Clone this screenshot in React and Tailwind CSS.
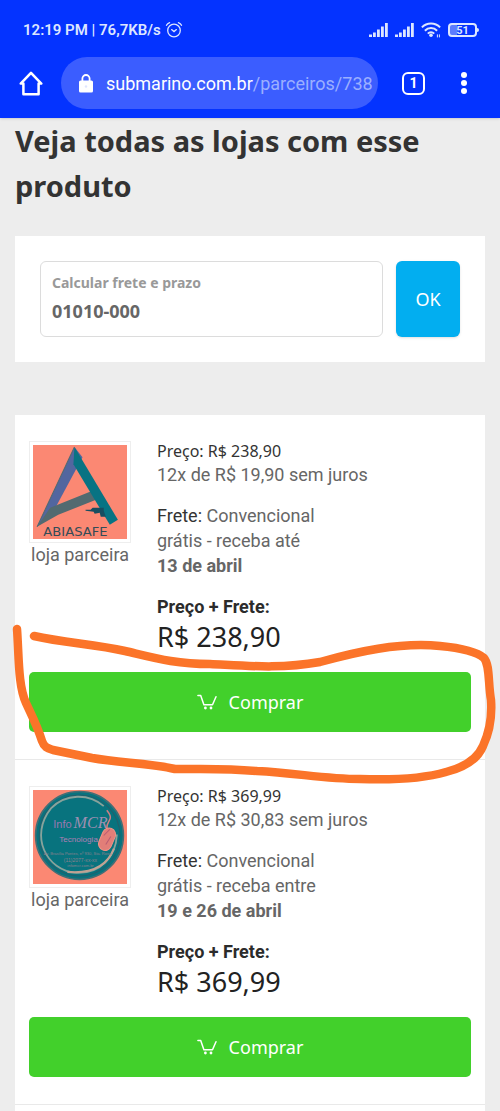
import React from "react";

const offers = [
  {
    id: "abiasafe",
    price: "R$ 238,90",
    installments: "12x de R$ 19,90 sem juros",
    receive: "grátis - receba até",
    date: "13 de abril",
    Logo: AbiasafeLogo,
  },
  {
    id: "infomcr",
    price: "R$ 369,99",
    installments: "12x de R$ 30,83 sem juros",
    receive: "grátis - receba entre",
    date: "19 e 26 de abril",
    Logo: InfoLogo,
  },
];

function AlarmIcon() {
  return (
    <svg viewBox="0 0 18 18" className="size-[18px]" fill="none" stroke="currentColor" strokeWidth="1.3" strokeLinecap="round" aria-hidden="true">
      <circle cx="9" cy="9.5" r="6.3" />
      <path d="M6.6 8.6 9 10.6l2.4-2M1.5 4.3Q2.4 2.3 4.6 1.6M16.5 4.3Q15.6 2.3 13.4 1.6" />
    </svg>
  );
}

function SignalIcon() {
  return (
    <svg viewBox="0 0 19 14" className="h-[14px] w-[19px]" fill="currentColor" aria-hidden="true">
      <path d="M0 11.5h3V14H0zM4 9.5h2.8V14H4zM8 6.5h2.8V14H8zM12 3.5h2.8V14H12zM16 0h2.8v14H16z" />
    </svg>
  );
}

function WifiIcon() {
  return (
    <svg viewBox="0 0 20 16" className="h-4 w-5" fill="none" stroke="currentColor" strokeWidth="2" aria-hidden="true">
      <path d="M.9 5.4a12.6 12.6 0 0 1 18.2 0M3.9 8.7a8.4 8.4 0 0 1 12.2 0M6.8 11.6a4.4 4.4 0 0 1 6.4 0" />
      <circle cx="10" cy="13.2" r="1.8" fill="currentColor" stroke="none" />
      <path d="M16.4 15.4v-3M18.4 12.4v3" strokeWidth="1" />
    </svg>
  );
}

function Battery() {
  return (
    <div className="flex items-center">
      <div className="flex h-[14px] w-[29px] items-center justify-center rounded-[4px] border-2 border-[#dde6ff] bg-linear-to-r from-[#5c7cff] from-30% to-[#0433ff] to-30% bg-origin-border text-[11px] leading-none font-bold">
        51
      </div>
      <div className="h-1 w-[2px] rounded-r-sm bg-[#dde6ff]" />
    </div>
  );
}

function HomeIcon() {
  return (
    <svg viewBox="0 0 24 25" className="h-[25px] w-6" fill="none" stroke="currentColor" strokeWidth="2.5" strokeLinejoin="round" strokeLinecap="round" aria-hidden="true">
      <path d="M1.7 12.6 12 1.8l10.3 10.8h-2.7v10.6H4.4V12.6z" />
    </svg>
  );
}

function LockIcon() {
  return (
    <svg viewBox="0 0 14 19" className="h-[19px] w-[14px]" aria-hidden="true">
      <path d="M3.4 8V4.6a3.6 3.6 0 0 1 7.2 0V8" fill="none" stroke="currentColor" strokeWidth="1.8" />
      <rect y="6.5" width="14" height="12" rx="1.6" fill="currentColor" />
      <circle cx="7" cy="12.5" r="1.2" fill="#dfe5ff" />
    </svg>
  );
}

function CartIcon() {
  return (
    <svg viewBox="0 0 20 16" className="h-4 w-5" fill="none" stroke="currentColor" strokeWidth="1.5" strokeLinecap="round" strokeLinejoin="round" aria-hidden="true">
      <path d="M.9 1.6h2.8l3.2 9.2h8.6l3.5-8" />
      <circle cx="8.4" cy="14" r="1.4" fill="currentColor" stroke="none" />
      <circle cx="14" cy="14" r="1.4" fill="currentColor" stroke="none" />
    </svg>
  );
}

function AbiasafeLogo() {
  return (
    <svg viewBox="0 0 93 93" className="block w-full bg-[#fb8873]" role="img" aria-label="Abiasafe">
      <path d="M41 2 49 12 19 68 4 81z" fill="#52669f" />
      <path d="M4 81 17 62 57 46 63 54 25 69z" fill="#526a70" />
      <path d="M41 2 84 74 76 79 40 19z" fill="#087383" />
      <path d="M41 2 4 81" stroke="#526a70" strokeWidth="1" />
      <path d="M52 64h5l2-2h11v3l2 6h-5l-1-4-5 1-1-2-8-1z" fill="#174e61" />
      <text x="42" y="90" textAnchor="middle" className="fill-[#344c57] font-['DejaVu_Sans'] text-[13px]">ABIASAFE</text>
    </svg>
  );
}

function InfoLogo() {
  return (
    <svg viewBox="0 0 93 93" className="block w-full bg-[#fb8873]" role="img" aria-label="Info MCR Tecnologia">
      <circle cx="46" cy="45" r="43.5" fill="#08737e" stroke="#456e75" strokeWidth="1.5" />
      <circle cx="46" cy="45" r="40" fill="none" stroke="#245e6b" strokeWidth="1" />
      <path d="M70 16A38 38 0 0 0 18 18C-4 45 13 80 43 82 67 83 82 66 83 44" fill="none" stroke="#88a29b" strokeWidth="1.8" />
      <path d="M34 81Q70 84 80 58" fill="none" stroke="#c1a293" strokeWidth="2" />
      <text x="20" y="38" className="fill-[#9a78b0] font-['Liberation_Sans'] text-[11px]">Info</text>
      <text x="40" y="38" className="fill-[#9c8fb1] font-['Liberation_Serif'] text-[16px] italic">MCR</text>
      <text x="26" y="51" className="fill-[#b07fb4] font-['Liberation_Sans'] text-[8px]">Tecnologia</text>
      <text x="44" y="64" textAnchor="middle" className="fill-[#8c818d] font-['Liberation_Sans'] text-[4px]">Av. Brasília Pontes, nº 930, Sta. Rosa</text>
      <text x="47" y="71" textAnchor="middle" className="fill-[#8c818d] font-['Liberation_Sans'] text-[5px]">(11)2077-xx-xx</text>
      <text x="47" y="76" textAnchor="middle" className="fill-[#8c818d] font-['Liberation_Sans'] text-[4px]">infomcr.com.br</text>
      <path d="M73 38C73 29 81 30 73 20" fill="none" stroke="#cf7f83" strokeWidth="1.5" />
      <rect x="67" y="37" width="13" height="23" rx="6.5" transform="rotate(23 73 48)" fill="#e27e78" stroke="#f19386" />
      <path d="m70 45 6-6M72 54l5-8" stroke="#b95c72" />
    </svg>
  );
}

function MarkerStroke() {
  return (
    <svg viewBox="0 0 500 170" preserveAspectRatio="none" className="pointer-events-none absolute -inset-x-[15px] top-[205px] z-10 h-[170px] w-[calc(100%+30px)]" fill="none" stroke="#fb7429" strokeWidth="8.5" strokeLinecap="round" strokeLinejoin="round" aria-hidden="true">
      <path d="M34 16C65 23 94 24 125 31C155 38 175 44 210 44C250 46 280 49 320 42C356 32 399 22 440 26C461 28 477 32 484 38C490 45 488 63 491 80C492 94 490 111 483 126C478 138 466 147 446 152C422 159 389 160 360 159C325 159 297 153 257 151C225 148 205 149 175 149C150 143 120 143 92 138L53 130C47 128 44 127 42 121C37 105 31 94 26 83C18 66 19 36 17 9" />
    </svg>
  );
}

function Offer({ offer, marked }) {
  const { Logo } = offer;
  return (
    <li className="relative border-b border-[#e9e9e9] px-[14px] pt-[26px] pb-[27px]">
      <div className="flex gap-[26px]">
        <div className="w-[102px] shrink-0 text-center">
          <div className="border border-[#eeeeee] p-[3px]">
            <Logo />
          </div>
          <p className="text-[18px] leading-6 whitespace-nowrap text-[#666]">loja parceira</p>
        </div>
        <div className="min-w-0 pb-[18px] text-[18px] leading-[25px] text-[#666]">
          <p className="font-['Noto_Sans',sans-serif] text-[16px] leading-[21px] text-[#333]">Preço: {offer.price}</p>
          <p>{offer.installments}</p>
          <p className="mt-4">
            <span className="text-[#333]">Frete:</span> Convencional
          </p>
          <p>{offer.receive}</p>
          <p className="font-bold">{offer.date}</p>
          <p className="mt-4 font-bold text-[#2b2b2b]">Preço + Frete:</p>
          <p className="font-['Noto_Sans',sans-serif] text-[27px] leading-[35px] text-[#222]">{offer.price}</p>
        </div>
      </div>
      <button type="button" className="flex h-[60px] w-full items-center justify-center gap-3 rounded-[5px] bg-[#42d02b] font-['Noto_Sans',sans-serif] text-[18px] text-white">
        <CartIcon />
        Comprar
      </button>
      {marked && <MarkerStroke />}
    </li>
  );
}

export default function App() {
  return (
    <div className="flex min-h-screen flex-col overflow-x-hidden bg-[#ededed] font-[Roboto,sans-serif]">
      <header className="bg-[#0433ff] pt-[18px] pb-[9px] text-white shadow-sm">
        <div className="flex h-6 items-center justify-between pr-[21px] pl-[23px] text-[#dde6ff]">
          <div className="flex items-center gap-1 text-[15px] font-semibold">
            <span>12:19 PM | 76,7KB/s</span>
            <AlarmIcon />
          </div>
          <div className="flex items-center gap-[7px]">
            <SignalIcon />
            <SignalIcon />
            <WifiIcon />
            <Battery />
          </div>
        </div>
        <div className="mt-[15px] flex items-center pr-[33px] pl-[19px]">
          <button type="button" aria-label="Página inicial">
            <HomeIcon />
          </button>
          <a href="#ofertas" className="ml-[18px] flex h-[52px] min-w-0 flex-1 items-center gap-[13px] overflow-hidden rounded-full bg-[#3b5dff] pl-[18px] text-[18px] whitespace-nowrap">
            <LockIcon />
            <span>
              submarino.com.br<span className="text-[#9bafff]">/parceiros/738</span>
            </span>
          </a>
          <button type="button" aria-label="Abas abertas" className="ml-6 flex size-[23px] items-center justify-center rounded-[6px] border-[2px] border-white text-[14px] leading-none font-bold">
            1
          </button>
          <button type="button" aria-label="Menu" className="ml-9 flex flex-col gap-[2px]">
            <span className="size-[6px] rounded-full bg-white" />
            <span className="size-[6px] rounded-full bg-white" />
            <span className="size-[6px] rounded-full bg-white" />
          </button>
        </div>
      </header>

      <main className="flex flex-1 flex-col px-[15px]">
        <h1 className="font-['Noto_Sans',sans-serif] text-[29px] leading-[45px] font-bold text-[#333]">
          Veja todas as lojas com esse produto
        </h1>

        <form className="mt-7 flex gap-[13px] bg-white px-[25px] py-[25px]" onSubmit={(e) => e.preventDefault()}>
          <div className="flex h-[76px] min-w-0 flex-1 flex-col justify-center rounded-[6px] border border-[#dcdcdc] px-[11px] font-['Noto_Sans',sans-serif] font-bold">
            <label htmlFor="cep" className="text-[14px] leading-6 text-[#999]">
              Calcular frete e prazo
            </label>
            <input id="cep" defaultValue="01010-000" className="h-8 w-full bg-transparent text-[18px] text-[#666] outline-none" />
          </div>
          <button type="submit" className="w-16 rounded-[6px] bg-[#02aef0] font-['Noto_Sans',sans-serif] text-[18px] text-white shadow-sm">
            OK
          </button>
        </form>

        <ul id="ofertas" className="mt-[53px] flex-1 bg-white">
          {offers.map((offer, i) => (
            <Offer key={offer.id} offer={offer} marked={i === 0} />
          ))}
        </ul>
      </main>
    </div>
  );
}
